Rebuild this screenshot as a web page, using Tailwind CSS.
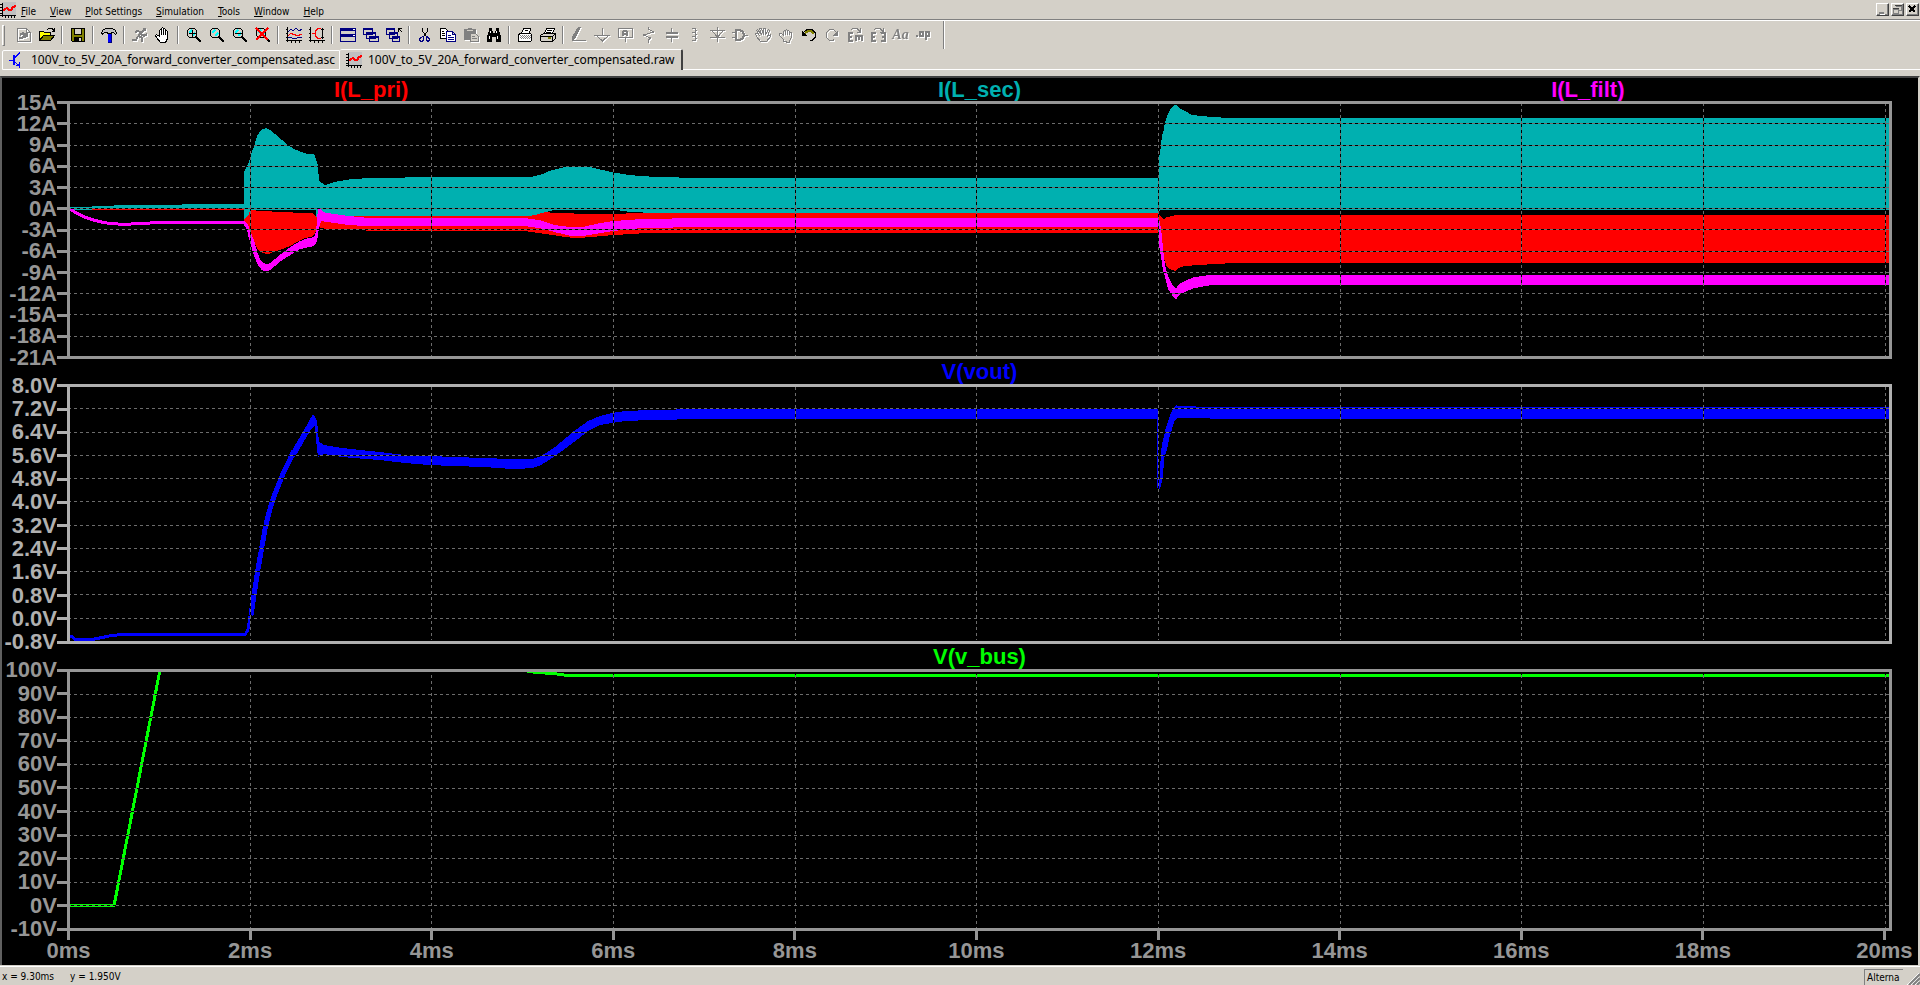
<!DOCTYPE html>
<html lang="en">
  <head>
    <meta charset="UTF-8" />
    <meta name="viewport" content="width=device-width, initial-scale=1.0" />
    <title>100V_to_5V_20A_forward_converter_compensated.raw</title>
    <script src="https://cdn.jsdelivr.net/npm/@tailwindcss/browser@4"></script>
  </head>
  <body
    class="flex flex-col h-screen overflow-hidden bg-[#d4d0c8] text-black font-['DejaVu_Sans_Condensed','Liberation_Sans',sans-serif] text-[10px] leading-3"
  >
    <!-- Shared icon shapes -->
    <svg class="hidden" aria-hidden="true">
      <symbol id="wave" viewBox="0 0 16 16">
        <path fill="#c0c0c0" d="M2 0h14v13H2z" />
        <path stroke="#000" fill="none" d="M2.500 1v14M0 13.500h16M0 2.500h2M0 5.500h2M0 8.500h2M0 11.500h2M5.500 13v3M8.500 13v3M11.500 13v3M14.500 13v3" />
        <path stroke="#f00" stroke-width="2" fill="none" d="M3 9l2-2 2-1 2 2h2l2-3 3-1" />
      </symbol>
      <symbol id="lens" viewBox="0 0 16 16">
        <circle cx="6" cy="6" r="5" fill="#d4d0c8" stroke="#000" />
        <path stroke="#0ff" stroke-width="2" fill="none" d="M3 6l3-3M6 9l3-3" />
        <path stroke="#000" stroke-width="2" d="M10 10l5 5" />
      </symbol>
    </svg>

    <!-- Menu bar -->
    <header class="flex h-5 shrink-0 items-center border-b border-[#808080]">
      <svg class="size-4 mr-1" shape-rendering="crispEdges"><use href="#wave" /></svg>
      <nav class="flex grow gap-3.5 pl-px pt-1">
        <button><u>F</u>ile</button>
        <button><u>V</u>iew</button>
        <button><u>P</u>lot Settings</button>
        <button><u>S</u>imulation</button>
        <button><u>T</u>ools</button>
        <button><u>W</u>indow</button>
        <button><u>H</u>elp</button>
      </nav>
      <div class="flex gap-0.5 pr-px">
        <button aria-label="Minimize" class="size-[13px] border border-t-white border-l-white border-r-[#404040] border-b-[#404040] shadow-[inset_-1px_-1px_0_#808080]">
          <svg class="size-[11px]" shape-rendering="crispEdges"><path fill="#808080" d="M2 8h5v2H2z" /><path fill="#fff" d="M3 10h5v1H3z" /></svg>
        </button>
        <button aria-label="Restore" class="size-[13px] border border-t-white border-l-white border-r-[#404040] border-b-[#404040] shadow-[inset_-1px_-1px_0_#808080]">
          <svg class="size-[11px]" shape-rendering="crispEdges"><path fill="none" stroke="#808080" d="M4 2.500h5.500v4H7M1.500 5.500h5v4h-5z" /><path stroke="#404040" d="M3 1.500h7M1 4.500h6" /></svg>
        </button>
        <button aria-label="Close" class="size-[13px] border border-t-white border-l-white border-r-[#404040] border-b-[#404040] shadow-[inset_-1px_-1px_0_#808080]">
          <svg class="size-[11px]" shape-rendering="crispEdges"><path stroke="#000" stroke-width="2" d="M2 2l6 6M8 2l-6 6" /></svg>
        </button>
      </div>
    </header>

    <!-- Toolbar -->
    <div class="flex h-[29px] shrink-0 items-center border-t border-white pl-0.5" role="toolbar">
      <span class="mr-[7px] h-[21px] w-[3px] border border-t-white border-l-white border-r-[#808080] border-b-[#808080]"></span>
      <button aria-label="New schematic" class="flex w-[23px] justify-center">
        <svg class="size-4 drop-shadow-[1px_1px_0_#fff]" fill="none" stroke="#808080" shape-rendering="crispEdges"><path d="M1.500 1.500h9l4 4v9h-13zM10.500 1.500v4h4" /><path stroke-width="2" d="M3 11h3l5-5M4 8l3-2 2 3-2 2M9 10l3-2" /></svg>
      </button>
      <button aria-label="Open" class="flex w-[23px] justify-center">
        <svg class="size-4" shape-rendering="crispEdges"><path fill="#ff0" stroke="#000" d="M.500 13.500v-9h4l1 1h6v3" /><path fill="#808000" stroke="#000" d="M.500 13.500l4-5h11l-4 5z" /><path fill="none" stroke="#000" d="M8 2.500l2-1h3l2 2M15.500 1v3h-3" /></svg>
      </button>
      <span class="mx-[3px] h-[18px] w-0.5 border-l border-r border-l-[#808080] border-r-white"></span>
      <button aria-label="Save" class="flex w-[23px] justify-center">
        <svg class="size-4" shape-rendering="crispEdges"><path fill="#808000" stroke="#000" d="M1.500 1.500h13v13h-12l-1-1z" /><path fill="#d4d0c8" stroke="#000" d="M4.500 1.500h7v6h-7z" /><path d="M4 10h8v4H4z" /><path fill="#d4d0c8" d="M9 11h2v3H9z" /></svg>
      </button>
      <span class="mx-[3px] h-[18px] w-0.5 border-l border-r border-l-[#808080] border-r-white"></span>
      <button aria-label="Control panel" class="flex w-[23px] justify-center">
        <svg class="size-4" shape-rendering="crispEdges"><path fill="#c0c0c0" stroke="#000" d="M.500 5.500l2-3 3-1h6l3 2 1 3-1 1-2-2h-2v1h-4v-1h-3l-2 2z" /><path fill="#00f" d="M7 7h4v8H7z" /><path fill="#000080" d="M10 7h1v9H7v-1h3z" /></svg>
      </button>
      <span class="mx-[3px] h-[18px] w-0.5 border-l border-r border-l-[#808080] border-r-white"></span>
      <button aria-label="Run" class="flex w-[23px] justify-center">
        <svg class="size-4 drop-shadow-[1px_1px_0_#fff]" fill="none" stroke="#808080" shape-rendering="crispEdges"><path fill="#808080" d="M11.500 1.500h2v2h-2z" /><path stroke-width="2" d="M11 4L6 9M9 5L5 4 3 6M9 7l3 2 3-2M7 9l3 2v4M6 9l-2 4H0" /></svg>
      </button>
      <button aria-label="Halt" class="flex w-[23px] justify-center">
        <svg class="size-4" shape-rendering="crispEdges"><path fill="#fff" stroke="#000" d="M5.500 15.500l-4-5-1-2 1-1 3 2v-6l1-1 1 1v4-6l1-1 1 1v6-5l1-1 1 1v5-3l1-1 1 1v7l-2 4z" /></svg>
      </button>
      <span class="mx-[3px] h-[18px] w-0.5 border-l border-r border-l-[#808080] border-r-white"></span>
      <button aria-label="Zoom in" class="flex w-[23px] justify-center">
        <svg class="size-4" shape-rendering="crispEdges"><use href="#lens" /><path stroke="#000" d="M3 6.500h7M6.500 3v7" /></svg>
      </button>
      <button aria-label="Zoom area" class="flex w-[23px] justify-center">
        <svg class="size-4" shape-rendering="crispEdges"><use href="#lens" /></svg>
      </button>
      <button aria-label="Zoom out" class="flex w-[23px] justify-center">
        <svg class="size-4" shape-rendering="crispEdges"><use href="#lens" /><path stroke="#000" d="M3 6.500h7" /></svg>
      </button>
      <button aria-label="Zoom full extents" class="flex w-[23px] justify-center">
        <svg class="size-4" shape-rendering="crispEdges"><use href="#lens" /><path stroke="#f00" stroke-width="2" d="M1 1l12 12M13 1L1 13" /></svg>
      </button>
      <span class="mx-[3px] h-[18px] w-0.5 border-l border-r border-l-[#808080] border-r-white"></span>
      <button aria-label="Autorange" class="flex w-[23px] justify-center">
        <svg class="size-4" fill="none" shape-rendering="crispEdges"><path stroke="#000" d="M1.500 0v15M0 13.500h16M0 2.500h2M0 6.500h2M0 10.500h2M5.500 13v3M9.500 13v3M13.500 13v3" /><path stroke="#000080" d="M2 5l3-3 2 2 3-3 3 3 3-2M2 10.500h3l2 1h3l2-1h4" /><path stroke="#f00" d="M2 8.500l3-2 3 1 3 1 5-1" /></svg>
      </button>
      <button aria-label="Toggle axis" class="flex w-[23px] justify-center">
        <svg class="size-4" fill="none" shape-rendering="crispEdges"><path stroke="#000" d="M1.500 0v15M0 13.500h16M0 2.500h2M0 6.500h2M0 10.500h2M5.500 13v3M9.500 13v3M13.500 13v3M13.500 1v11M12 2.500h3M12 10.500h3" /><path stroke="#f00" d="M12 1.500H9l-2 2-1 3 1 3 2 2h3M3 6.500h4" /></svg>
      </button>
      <span class="mx-[3px] h-[18px] w-0.5 border-l border-r border-l-[#808080] border-r-white"></span>
      <button aria-label="Tile" class="flex w-[23px] justify-center">
        <svg class="size-4" shape-rendering="crispEdges"><path fill="#000080" d="M0 1h16v14H0z" /><path fill="#d4d0c8" d="M1 4h14v3H1zM1 10h14v4H1z" /><path fill="#fff" d="M13 2h2v1h-2zM13 8h2v1h-2z" /></svg>
      </button>
      <button aria-label="Cascade" class="flex w-[23px] justify-center">
        <svg class="size-4" fill="#d4d0c8" stroke="#000080" shape-rendering="crispEdges"><path d="M.500 1.500h9v6h-9zM3.500 5.500h9v6h-9zM6.500 9.500h9v5h-9z" /><path stroke-width="2" d="M0 2h10M3 6h10M6 10h10" /></svg>
      </button>
      <button aria-label="Close all" class="flex w-[23px] justify-center">
        <svg class="size-4" fill="#d4d0c8" stroke="#000080" shape-rendering="crispEdges"><path d="M.500 1.500h8v6h-8zM3.500 5.500h8v6h-8zM6.500 9.500h7v5h-7z" /><path stroke-width="2" d="M0 2h9M3 6h9M6 10h8" /><path fill="none" stroke="#000" d="M12 5V1.500h4M12 1l4 4" /></svg>
      </button>
      <span class="mx-[3px] h-[18px] w-0.5 border-l border-r border-l-[#808080] border-r-white"></span>
      <button aria-label="Cut" class="flex w-[23px] justify-center">
        <svg class="size-4" fill="none" shape-rendering="crispEdges"><path stroke="#000" d="M5.500 1v3l4 6M10.500 1v3l-4 6" /><path stroke="#000080" d="M6.500 9.500l-3 1-1 2 1 2h2l1-2zM9.500 9.500l2 1 1 2-1 2h-1l-1-2z" /></svg>
      </button>
      <button aria-label="Copy" class="flex w-[23px] justify-center">
        <svg class="size-4" fill="#fff" shape-rendering="crispEdges"><path stroke="#000" d="M.500 1.500h5l3 3v7h-8z" /><path stroke="#000080" d="M6.500 4.500h6l3 3v7h-9zM12.500 4.500v3h3" /><path stroke="#000" d="M2 4.500h2M2 6.500h3M2 8.500h3" /><path stroke="#000080" d="M8 8.500h3M8 10.500h6M8 12.500h6" /></svg>
      </button>
      <button aria-label="Paste" class="flex w-[23px] justify-center">
        <svg class="size-4 drop-shadow-[1px_1px_0_#fff]" shape-rendering="crispEdges"><path fill="#808080" d="M1 2h4V1h4v1h4v11H1z" /><path fill="#d4d0c8" d="M4 3h6v1H4z" /><path fill="#d4d0c8" stroke="#808080" d="M7.500 6.500h5l3 3v5h-8zM9 9.500h3M9 11.500h5" /></svg>
      </button>
      <button aria-label="Find" class="flex w-[23px] justify-center">
        <svg class="size-4" shape-rendering="crispEdges"><path d="M3 1h3v3h1v2h2V4h1V1h3v3l2 5v6h-5v-5H6v5H1V9l2-5z" /><path fill="#fff" d="M4 4h1v2H4zM3 9h1v3H3zM10 4h1v2h-1zM11 9h1v3h-1z" /></svg>
      </button>
      <span class="mx-[3px] h-[18px] w-0.5 border-l border-r border-l-[#808080] border-r-white"></span>
      <button aria-label="Print setup" class="flex w-[23px] justify-center">
        <svg class="size-4" fill="#fff" stroke="#000" shape-rendering="crispEdges"><path d="M4.500 6.500l2-5h7l-1 5M1.500 7.500l2-1h10l1 1v6l-1 1h-12z" /><path stroke="#808080" stroke-dasharray="1 1" d="M3 8.500h11M4 9.500h9M3 10.500h11M4 11.500h9" /><path d="M8 3.500h3" /></svg>
      </button>
      <button aria-label="Print" class="flex w-[23px] justify-center">
        <svg class="size-4" fill="#fff" stroke="#000" shape-rendering="crispEdges"><path d="M4.500 6.500l2-5h8l-2 5" /><path fill="#d4d0c8" d="M.500 8.500l3-2h11l1 1v4l-3 3h-11l-1-1zM.500 9.500h12l3-3M12.500 9.500v5M7 3.500h5M6 5.500h5" /><path stroke="#808000" stroke-width="2" d="M8 11h3" /></svg>
      </button>
      <span class="mx-[3px] h-[18px] w-0.5 border-l border-r border-l-[#808080] border-r-white"></span>
      <button aria-label="Wire" class="flex w-[23px] justify-center">
        <svg class="size-4 drop-shadow-[1px_1px_0_#fff]" fill="#808080" shape-rendering="crispEdges"><path d="M7 0h3L5 10l-3 4H1v-4zM1 13h14v1H1z" /></svg>
      </button>
      <button aria-label="Ground" class="flex w-[23px] justify-center">
        <svg class="size-4 drop-shadow-[1px_1px_0_#fff]" fill="none" stroke="#808080" shape-rendering="crispEdges"><path d="M8.500 1v7M0 8.500h16M3 9l5.500 5L14 9" /></svg>
      </button>
      <button aria-label="Label net" class="flex w-[23px] justify-center">
        <svg class="size-4 drop-shadow-[1px_1px_0_#fff]" fill="none" stroke="#808080" shape-rendering="crispEdges"><path d="M1.500 1.500h14v9h-14zM8.500 11v4" /><path stroke-width="2" d="M6 9V5l1-1h2l1 1v4M6 7h4" /></svg>
      </button>
      <button aria-label="Resistor" class="flex w-[23px] justify-center">
        <svg class="size-4 drop-shadow-[1px_1px_0_#fff]" fill="none" stroke="#808080" shape-rendering="crispEdges"><path d="M8.500 0v2l5 3-10 3 7 3-2 2v3" /></svg>
      </button>
      <button aria-label="Capacitor" class="flex w-[23px] justify-center">
        <svg class="size-4 drop-shadow-[1px_1px_0_#fff]" fill="none" stroke="#808080" shape-rendering="crispEdges"><path d="M8.500 1v5M8.500 10v5" /><path stroke-width="2" d="M3 6h12M3 10h12" /></svg>
      </button>
      <button aria-label="Inductor" class="flex w-[23px] justify-center">
        <svg class="size-4 drop-shadow-[1px_1px_0_#fff]" fill="none" stroke="#808080" shape-rendering="crispEdges"><path d="M6 1.500h3l1 2-1 2H6M6 5.500h3l1 2-1 2H6M6 9.500h3l1 2-1 2H6" /></svg>
      </button>
      <button aria-label="Diode" class="flex w-[23px] justify-center">
        <svg class="size-4 drop-shadow-[1px_1px_0_#fff]" fill="none" stroke="#808080" shape-rendering="crispEdges"><path d="M8.500 0v15M1 3.500h15M3 4l5.500 6L14 4M1 10.500h15" /></svg>
      </button>
      <button aria-label="Component" class="flex w-[23px] justify-center">
        <svg class="size-4 drop-shadow-[1px_1px_0_#fff]" fill="none" stroke="#808080" shape-rendering="crispEdges"><path d="M0 5.500h3M0 10.500h3M12 8.500h4" /><path stroke-width="2" d="M4 3h4l3 2 1 3-1 3-3 2H4z" /></svg>
      </button>
      <button aria-label="Move" class="flex w-[23px] justify-center">
        <svg class="size-4 drop-shadow-[1px_1px_0_#fff]" fill="none" stroke="#808080" shape-rendering="crispEdges"><path d="M5.500 14.500l-4-5-1-3h2l2 2-3-5 1-1 4 5-2-6h2l2 6v-6h2v6l3-5 1 1-2 6 3-2v2l-4 5z" /></svg>
      </button>
      <button aria-label="Drag" class="flex w-[23px] justify-center">
        <svg class="size-4 drop-shadow-[1px_1px_0_#fff]" fill="none" stroke="#808080" shape-rendering="crispEdges"><path d="M5.500 14.500v-2l-4-4v-2h2l2 2v-4l1-1 1 1v3-4l1-1 1 1v4-3l1-1 1 1v3-2h2v5l-2 3v2z" /></svg>
      </button>
      <button aria-label="Undo" class="flex w-[23px] justify-center">
        <svg class="size-4" fill="none" shape-rendering="crispEdges"><path stroke="#808000" stroke-width="2" d="M4 6l3-2h3l3 3" /><path stroke="#000" d="M3 5l3-2.500h5l3 3v5l-3 3H9" /><path d="M1 4v5h5z" fill="#000" /></svg>
      </button>
      <button aria-label="Redo" class="flex w-[23px] justify-center">
        <svg class="size-4 drop-shadow-[1px_1px_0_#fff]" fill="none" stroke="#808080" shape-rendering="crispEdges"><path d="M12 5L9.500 2.500h-4l-3 3v5l3 3h3l2-1" /><path d="M14 3v6H8z" fill="#808080" stroke="none" /></svg>
      </button>
      <button aria-label="Rotate" class="flex w-[23px] justify-center">
        <svg class="size-4 drop-shadow-[1px_1px_0_#fff]" fill="none" stroke="#808080" shape-rendering="crispEdges"><path d="M4 3l2-1.500h4l3 3M13.500 1v4h-4" /><path stroke-width="2" d="M6 6H2v8h4M2 10h3M9 14V9h6v5M12 9v4" /></svg>
      </button>
      <button aria-label="Mirror" class="flex w-[23px] justify-center">
        <svg class="size-4 drop-shadow-[1px_1px_0_#fff]" fill="none" stroke="#808080" shape-rendering="crispEdges"><path d="M4 3l2-1.500h4l3 3M13.500 1v4h-4" /><path stroke-width="2" d="M6 6H2v8h4M2 10h3M11 6h4v8h-4M15 10h-3" /></svg>
      </button>
      <button aria-label="Text" class="w-[23px] text-center text-[#808080] font-['Liberation_Serif',serif] text-sm leading-4 font-bold italic drop-shadow-[1px_1px_0_#fff]">Aa</button>
      <button aria-label="SPICE directive" class="flex w-[23px] justify-center">
        <svg class="size-4 drop-shadow-[1px_1px_0_#fff]" fill="none" stroke="#808080" shape-rendering="crispEdges"><path fill="#808080" d="M.500 8.500h1v1h-1z" /><path stroke-width="2" d="M4 5h3v4H4zM10 13V5h3v4h-3" /></svg>
      </button>
      <span class="ml-2 h-[28px] w-0.5 border-l border-r border-l-[#808080] border-r-white"></span>
    </div>

    <!-- Document tabs -->
    <div class="flex h-[21px] shrink-0 items-end font-['Noto_Sans','Liberation_Sans',sans-serif] text-[12px]" role="tablist">
      <button role="tab" aria-selected="false" class="ml-0.5 flex h-5 items-center whitespace-nowrap rounded-tl-xs border border-white pl-1.5 pr-1">
        <svg class="mr-1.5 size-4" fill="none" stroke="#00f" shape-rendering="crispEdges"><path stroke-width="2" d="M5 3v10" /><path d="M0 8.500h4M5 6.500l5-5V0M5 9.500l5 4V16M7 13.500h3V10" /></svg>
        100V_to_5V_20A_forward_converter_compensated.asc
      </button>
      <button role="tab" aria-selected="true" class="flex h-[21px] items-center whitespace-nowrap rounded-t-xs border-t border-r-2 border-t-white border-r-[#404040] pb-px pl-1.5 pr-1.5">
        <svg class="mr-1.5 size-4" shape-rendering="crispEdges"><use href="#wave" /></svg>
        100V_to_5V_20A_forward_converter_compensated.raw
      </button>
      <span class="h-px grow bg-white"></span>
    </div>
    <div class="h-1.5 shrink-0"></div>

    <!-- Waveform window -->
    <main
      class="flex grow min-h-0 flex-col border-t-2 border-l-2 border-r-2 border-t-[#404040] border-l-[#606060] border-r-[#d4d0c8] bg-black pl-px text-[22px] leading-none font-bold font-['Liberation_Sans',Arial,sans-serif] text-[#969696]"
    >
      <!-- Pane 1: inductor currents -->
      <h2 class="ml-16 mr-[26px] grid h-[23px] shrink-0 grid-cols-3 pt-px text-center">
        <span class="text-[#f00]">I(L_pri)</span>
        <span class="text-[#00b0b0]">I(L_sec)</span>
        <span class="text-[#f0f]">I(L_filt)</span>
      </h2>
      <section class="flex flex-[258] min-h-0">
        <ul class="flex w-16 shrink-0 flex-col justify-between">
          <li class="flex h-[3px] items-center justify-end">15A<i class="h-[3px] w-2.5 bg-[#969696]"></i></li>
          <li class="flex h-[3px] items-center justify-end">12A<i class="h-[3px] w-2.5 bg-[#969696]"></i></li>
          <li class="flex h-[3px] items-center justify-end">9A<i class="h-[3px] w-2.5 bg-[#969696]"></i></li>
          <li class="flex h-[3px] items-center justify-end">6A<i class="h-[3px] w-2.5 bg-[#969696]"></i></li>
          <li class="flex h-[3px] items-center justify-end">3A<i class="h-[3px] w-2.5 bg-[#969696]"></i></li>
          <li class="flex h-[3px] items-center justify-end">0A<i class="h-[3px] w-2.5 bg-[#969696]"></i></li>
          <li class="flex h-[3px] items-center justify-end">-3A<i class="h-[3px] w-2.5 bg-[#969696]"></i></li>
          <li class="flex h-[3px] items-center justify-end">-6A<i class="h-[3px] w-2.5 bg-[#969696]"></i></li>
          <li class="flex h-[3px] items-center justify-end">-9A<i class="h-[3px] w-2.5 bg-[#969696]"></i></li>
          <li class="flex h-[3px] items-center justify-end">-12A<i class="h-[3px] w-2.5 bg-[#969696]"></i></li>
          <li class="flex h-[3px] items-center justify-end">-15A<i class="h-[3px] w-2.5 bg-[#969696]"></i></li>
          <li class="flex h-[3px] items-center justify-end">-18A<i class="h-[3px] w-2.5 bg-[#969696]"></i></li>
          <li class="flex h-[3px] items-center justify-end">-21A<i class="h-[3px] w-2.5 bg-[#969696]"></i></li>
        </ul>
        <div class="mr-[26px] min-w-0 grow border-[3px] border-[#969696]">
          <svg class="block size-full" viewBox="70 105 1819 252" preserveAspectRatio="none" shape-rendering="crispEdges" fill="none">
            <!-- I(L_sec) -->
            <path fill="#00b0b0" d="M70 208H92V207H114V206H182V205H244V173L249 163 250 158 253 150 255 144 257 137 260 132 263 130 266 129 270 131 275 135 282 141 288 146 294 150 302 153 308 155 314 155 316 160 318 167 319 182 322 184 325 186 331 184 339 182 351 180 369 179 429 178H529L535 177 543 175 549 172 557 170 565 168H590L598 170 612 173 629 176 657 178 712 179H1158V165L1160 153 1161 147 1162 136 1164 130 1165 123 1168 115 1171 109 1174 106H1176L1179 109 1185 112 1192 116 1202 117 1213 118 1230 119H1889V211H1160L1158 214H662L632 213 617 211H553L545 213 535 216 528 217H317L316 219V211H250L249 220H244V209H92V211H70z" />
            <!-- I(L_pri) -->
            <path stroke="#f00" d="M92 210.500H244" />
            <path fill="#f00" d="M244 220L249 215 250 211 282 213 313 214 316 218H319L362 217H528L535 216 545 213 560 214 600 215 640 214H1158L1161 217 1164 220 1167 218 1176 216H1889V264H1230L1195 266 1184 267 1178 269 1176 272 1170 270 1166 266 1163 255 1161 240 1158 234H645L612 236 590 238 575 239 560 237 540 234 525 232H380L359 231 327 230 319 228 316 232 313 237 305 239 296 243 290 247 282 250 273 253 268 255 263 254 259 252 256 247 250 233 244 222z" />
            <!-- I(L_filt) -->
            <path stroke="#f0f" stroke-width="3" d="M70 210L75 213 85 218 94 221 102 223 108 224 120 225H128L157 223.500H244L247 227 250 236" />
            <path fill="#f0f" d="M249 229L254 241 257 252 260 260 262 263 266 265 270 264 276 259 282 254 290 248 300 242 308 239 314 238 316 233 317 220 318 210H321L323 213 335 215 350 217 370 219H525L540 221 555 226 572 228H582L600 224 612 222 640 220 690 219H1158L1160 223 1162 237 1163 250 1165 266 1168 277 1172 285 1176 289 1179 285 1186 281 1194 278 1208 276H1889V286H1210L1194 289 1186 292 1179 296 1176 300 1172 296 1168 290 1165 278 1163 271 1161 258 1158 240V228H690L640 229 612 232 600 234 582 237H572L555 233 540 229 525 227H370L350 226 335 224 321 222 319 228 317 242 314 247 308 248 300 250 290 256 282 261 276 266 270 271 266 272 262 271 258 266 255 259 252 250 248 236z" />
            <path stroke="#000" d="M70 124.500H1889M70 146.500H1889M70 167.500H1889M70 188.500H1889M70 209.500H1889M70 230.500H1889M70 252.500H1889M70 273.500H1889M70 294.500H1889M70 315.500H1889M70 337.500H1889M250.500 105V357M431.500 105V357M613.500 105V357M795.500 105V357M976.500 105V357M1158.500 105V357M1340.500 105V357M1521.500 105V357M1703.500 105V357M1885.500 105V357" />
            <path stroke="#6c6c6c" stroke-dasharray="3" stroke-dashoffset="2" d="M70 124.500H1889M70 146.500H1889M70 167.500H1889M70 188.500H1889M70 209.500H1889M70 230.500H1889M70 252.500H1889M70 273.500H1889M70 294.500H1889M70 315.500H1889M70 337.500H1889" />
            <path stroke="#6c6c6c" stroke-dasharray="3" stroke-dashoffset="1" d="M250.500 105V357M431.500 105V357M613.500 105V357M795.500 105V357M976.500 105V357M1158.500 105V357M1340.500 105V357M1521.500 105V357M1703.500 105V357M1885.500 105V357" />
          </svg>
        </div>
      </section>

      <!-- Pane 2: output voltage -->
      <h2 class="ml-16 mr-[26px] h-[25px] shrink-0 pt-0.5 text-center">
        <span class="text-[#00f]">V(vout)</span>
      </h2>
      <section class="flex flex-[259] min-h-0 text-[#b0b0b0]">
        <ul class="flex w-16 shrink-0 flex-col justify-between">
          <li class="flex h-[3px] items-center justify-end">8.0V<i class="h-[3px] w-2.5 bg-[#b0b0b0]"></i></li>
          <li class="flex h-[3px] items-center justify-end">7.2V<i class="h-[3px] w-2.5 bg-[#b0b0b0]"></i></li>
          <li class="flex h-[3px] items-center justify-end">6.4V<i class="h-[3px] w-2.5 bg-[#b0b0b0]"></i></li>
          <li class="flex h-[3px] items-center justify-end">5.6V<i class="h-[3px] w-2.5 bg-[#b0b0b0]"></i></li>
          <li class="flex h-[3px] items-center justify-end">4.8V<i class="h-[3px] w-2.5 bg-[#b0b0b0]"></i></li>
          <li class="flex h-[3px] items-center justify-end">4.0V<i class="h-[3px] w-2.5 bg-[#b0b0b0]"></i></li>
          <li class="flex h-[3px] items-center justify-end">3.2V<i class="h-[3px] w-2.5 bg-[#b0b0b0]"></i></li>
          <li class="flex h-[3px] items-center justify-end">2.4V<i class="h-[3px] w-2.5 bg-[#b0b0b0]"></i></li>
          <li class="flex h-[3px] items-center justify-end">1.6V<i class="h-[3px] w-2.5 bg-[#b0b0b0]"></i></li>
          <li class="flex h-[3px] items-center justify-end">0.8V<i class="h-[3px] w-2.5 bg-[#b0b0b0]"></i></li>
          <li class="flex h-[3px] items-center justify-end">0.0V<i class="h-[3px] w-2.5 bg-[#b0b0b0]"></i></li>
          <li class="flex h-[3px] items-center justify-end">-0.8V<i class="h-[3px] w-2.5 bg-[#b0b0b0]"></i></li>
        </ul>
        <div class="mr-[26px] min-w-0 grow border-[3px] border-[#b0b0b0]">
          <svg class="block size-full" viewBox="70 388 1819 253" preserveAspectRatio="none" shape-rendering="crispEdges" fill="none">
            <path stroke="#00f" stroke-width="3" d="M70 636L75 640H93L103 638 112 636 120 635.500H245L248 630 250 617" />
            <path stroke="#00f" stroke-width="5" d="M251 616L254 596 258 570 262 547 265 530 269 513 274 497 282 477 290 460 294 452" />
            <path fill="#00f" d="M290 455L294 448 304 431 313 415 315 418 317 422 319 443 321 444 324 446 343 449 380 453 406 456 430 457 485 459 514 460 532 460 541 457 555 448 574 432 588 422 600 417 612 414 625 412 650 411 700 410H1158V488H1159L1161 454 1162 445 1164 437 1166 428 1168 422 1171 414 1174 408 1176 406 1178 407H1192L1200 408H1889V420H1213L1208 419H1177L1174 423 1172 430 1169 440 1167 450 1164 460 1163 478 1160 490 1157 489V420H700L650 421 625 422 612 424 600 426 588 432 574 443 555 457 541 466 532 469 514 470 485 468 430 466 406 464 380 461 343 458 324 455 318 458 316 440 315 427 312 429 304 442 295 458z" />
            <path stroke="#000" d="M70 409.500H1889M70 433.500H1889M70 456.500H1889M70 479.500H1889M70 502.500H1889M70 526.500H1889M70 549.500H1889M70 572.500H1889M70 595.500H1889M70 619.500H1889M250.500 388V641M431.500 388V641M613.500 388V641M795.500 388V641M976.500 388V641M1158.500 388V641M1340.500 388V641M1521.500 388V641M1703.500 388V641M1885.500 388V641" />
            <path stroke="#6c6c6c" stroke-dasharray="3" stroke-dashoffset="2" d="M70 409.500H1889M70 433.500H1889M70 456.500H1889M70 479.500H1889M70 502.500H1889M70 526.500H1889M70 549.500H1889M70 572.500H1889M70 595.500H1889M70 619.500H1889" />
            <path stroke="#6c6c6c" stroke-dasharray="3" d="M250.500 388V641M431.500 388V641M613.500 388V641M795.500 388V641M976.500 388V641M1158.500 388V641M1340.500 388V641M1521.500 388V641M1703.500 388V641M1885.500 388V641" />
          </svg>
        </div>
      </section>

      <!-- Pane 3: bus voltage -->
      <h2 class="ml-16 mr-[26px] h-[25px] shrink-0 pt-0.5 text-center">
        <span class="text-[#0f0]">V(v_bus)</span>
      </h2>
      <section class="flex flex-[262] min-h-0">
        <ul class="flex w-16 shrink-0 flex-col justify-between">
          <li class="flex h-[3px] items-center justify-end">100V<i class="h-[3px] w-2.5 bg-[#969696]"></i></li>
          <li class="flex h-[3px] items-center justify-end">90V<i class="h-[3px] w-2.5 bg-[#969696]"></i></li>
          <li class="flex h-[3px] items-center justify-end">80V<i class="h-[3px] w-2.5 bg-[#969696]"></i></li>
          <li class="flex h-[3px] items-center justify-end">70V<i class="h-[3px] w-2.5 bg-[#969696]"></i></li>
          <li class="flex h-[3px] items-center justify-end">60V<i class="h-[3px] w-2.5 bg-[#969696]"></i></li>
          <li class="flex h-[3px] items-center justify-end">50V<i class="h-[3px] w-2.5 bg-[#969696]"></i></li>
          <li class="flex h-[3px] items-center justify-end">40V<i class="h-[3px] w-2.5 bg-[#969696]"></i></li>
          <li class="flex h-[3px] items-center justify-end">30V<i class="h-[3px] w-2.5 bg-[#969696]"></i></li>
          <li class="flex h-[3px] items-center justify-end">20V<i class="h-[3px] w-2.5 bg-[#969696]"></i></li>
          <li class="flex h-[3px] items-center justify-end">10V<i class="h-[3px] w-2.5 bg-[#969696]"></i></li>
          <li class="flex h-[3px] items-center justify-end">0V<i class="h-[3px] w-2.5 bg-[#969696]"></i></li>
          <li class="flex h-[3px] items-center justify-end">-10V<i class="h-[3px] w-2.5 bg-[#969696]"></i></li>
        </ul>
        <div class="mr-[26px] min-w-0 grow border-[3px] border-[#969696]">
          <svg class="block size-full" viewBox="70 672 1819 256" preserveAspectRatio="none" shape-rendering="crispEdges" fill="none">
            <path stroke="#0f0" stroke-width="3" d="M70 905.500H114L160 670M527 671.500L545 673 557 674 567 675.500H1889" />
            <path stroke="#000" d="M70 694.500H1889M70 717.500H1889M70 741.500H1889M70 764.500H1889M70 788.500H1889M70 811.500H1889M70 835.500H1889M70 858.500H1889M70 882.500H1889M70 905.500H1889M250.500 672V928M431.500 672V928M613.500 672V928M795.500 672V928M976.500 672V928M1158.500 672V928M1340.500 672V928M1521.500 672V928M1703.500 672V928M1885.500 672V928" />
            <path stroke="#6c6c6c" stroke-dasharray="3" stroke-dashoffset="2" d="M70 694.500H1889M70 717.500H1889M70 741.500H1889M70 764.500H1889M70 788.500H1889M70 811.500H1889M70 835.500H1889M70 858.500H1889M70 882.500H1889M70 905.500H1889" />
            <path stroke="#6c6c6c" stroke-dasharray="3" stroke-dashoffset="3" d="M250.500 672V928M431.500 672V928M613.500 672V928M795.500 672V928M976.500 672V928M1158.500 672V928M1340.500 672V928M1521.500 672V928M1703.500 672V928M1885.500 672V928" />
          </svg>
        </div>
      </section>

      <!-- Time axis -->
      <ol class="ml-16 mr-8 flex h-[34px] shrink-0 justify-between">
        <li class="flex w-[3px] flex-col items-center"><i class="h-[9px] w-[3px] bg-[#969696]"></i>0ms</li>
        <li class="flex w-[3px] flex-col items-center"><i class="h-[9px] w-[3px] bg-[#969696]"></i>2ms</li>
        <li class="flex w-[3px] flex-col items-center"><i class="h-[9px] w-[3px] bg-[#969696]"></i>4ms</li>
        <li class="flex w-[3px] flex-col items-center"><i class="h-[9px] w-[3px] bg-[#969696]"></i>6ms</li>
        <li class="flex w-[3px] flex-col items-center"><i class="h-[9px] w-[3px] bg-[#969696]"></i>8ms</li>
        <li class="flex w-[3px] flex-col items-center"><i class="h-[9px] w-[3px] bg-[#969696]"></i>10ms</li>
        <li class="flex w-[3px] flex-col items-center"><i class="h-[9px] w-[3px] bg-[#969696]"></i>12ms</li>
        <li class="flex w-[3px] flex-col items-center"><i class="h-[9px] w-[3px] bg-[#969696]"></i>14ms</li>
        <li class="flex w-[3px] flex-col items-center"><i class="h-[9px] w-[3px] bg-[#969696]"></i>16ms</li>
        <li class="flex w-[3px] flex-col items-center"><i class="h-[9px] w-[3px] bg-[#969696]"></i>18ms</li>
        <li class="flex w-[3px] flex-col items-center"><i class="h-[9px] w-[3px] bg-[#969696]"></i>20ms</li>
      </ol>
    </main>

    <!-- Status bar -->
    <footer class="flex h-5 shrink-0 items-end border-t border-[#d4d0c8] shadow-[inset_0_1px_0_#fff]">
      <p class="flex h-4 grow items-center gap-4 pl-0.5"><span>x = 9.30ms</span><span>y = 1.950V</span></p>
      <p class="flex h-4 w-[39px] items-center overflow-hidden border-t border-l border-[#808080] pl-0.5">Alterna</p>
      <svg class="ml-1 h-3 w-[13px]" fill="none"><path stroke="#fff" d="M0 12L12 0M4 12l8-8M8 12l4-4" /><path stroke="#808080" stroke-width="2" d="M2 12L13 1M6 12l7-7M10 12l3-3" /></svg>
    </footer>
  </body>
</html>
